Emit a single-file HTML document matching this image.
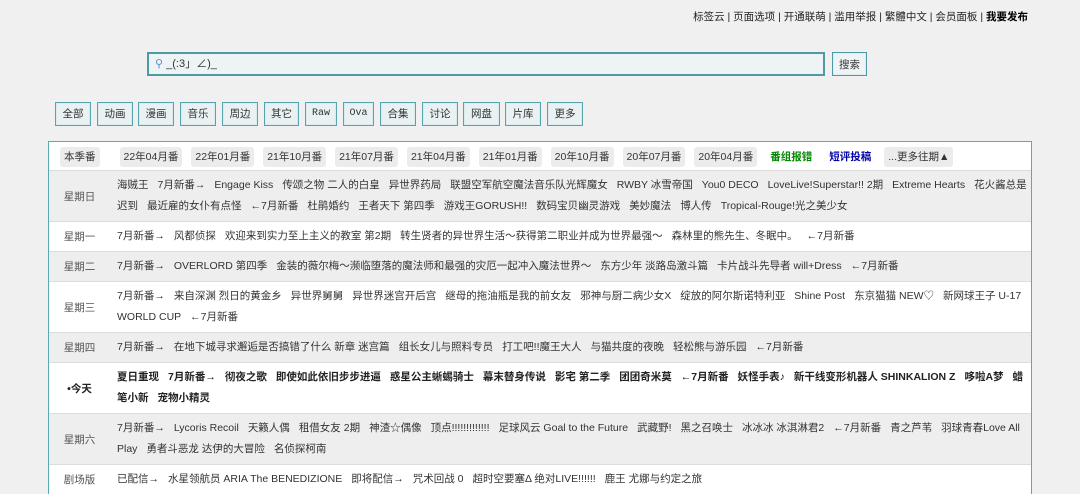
<!DOCTYPE html>
<html><head><meta charset="utf-8"><style>
body{margin:0;background:#f0f0f0;font-family:"Liberation Sans","Noto Sans CJK SC",sans-serif;font-size:10.5px;color:#333;width:1080px;height:492px;overflow:hidden;position:relative}
.top{position:absolute;right:52px;top:9px;font-size:10.5px;color:#222}
.top b{color:#000}
.search{position:absolute;left:147px;top:52px;width:674px;height:20px;border:2px solid #4e9aa3;background:#eef3f5;font-size:11px;line-height:20px}
.search span{margin-left:6px;color:#5a8fd0}
.btn{position:absolute;left:832px;top:52px;width:33px;height:22px;border:1px solid #4e9aa3;background:#eef3f5;text-align:center;line-height:24px;font-size:10.5px;box-shadow:inset 0 0 0 1px #dfeff1}
.cat{position:absolute;top:102px;height:22px;border:1px solid #56a4ad;background:#e9f1f3;text-align:center;line-height:22px;font-size:10.5px;box-shadow:inset 0 0 0 1px #d8ecef}
.tbl{position:absolute;left:48px;top:141px;width:982px;border:1px solid #5aaab2;border-bottom:none;background:#fff}
.hd{height:28px;padding-left:11px;white-space:nowrap}
.hd span{display:inline-block;margin-top:5px;height:20px;line-height:20px;background:#ececec;border-radius:3px;padding:0 4px;margin-right:9px;color:#333}
.hd span:first-child{margin-right:20px}
.row{display:flex;border-top:1px solid #ddd}
.row.g{background:#eeeeee}
.d{width:61px;flex:none;display:flex;align-items:center;justify-content:center;color:#555}
.c{padding:4px 0 4px 7px;line-height:21px;flex:1;white-space:nowrap;overflow:hidden}
.c i{font-style:normal;margin-right:9px}
.b{font-weight:bold;color:#222}
</style></head><body>
<div class="top">标签云 | 页面选项 | 开通联萌 | 滥用举报 | 繁體中文 | 会员面板 | <b>我要发布</b></div>
<div class="search"><span>⚲</span> _(:3」∠)_</div>
<div class="btn">搜索</div>
<div class="cat" style="left:55px;width:34px">全部</div>
<div class="cat" style="left:97px;width:34px">动画</div>
<div class="cat" style="left:138px;width:34px">漫画</div>
<div class="cat" style="left:180px;width:34px">音乐</div>
<div class="cat" style="left:222px;width:34px">周边</div>
<div class="cat" style="left:264px;width:33px">其它</div>
<div class="cat" style="left:305px;width:30px;font-family:'Liberation Mono',monospace;font-size:10px">Raw</div>
<div class="cat" style="left:343px;width:29px;font-family:'Liberation Mono',monospace;font-size:10px">Ova</div>
<div class="cat" style="left:380px;width:34px">合集</div>
<div class="cat" style="left:422px;width:34px">讨论</div>
<div class="cat" style="left:463px;width:35px">网盘</div>
<div class="cat" style="left:505px;width:34px">片库</div>
<div class="cat" style="left:547px;width:34px">更多</div>
<div class="tbl">
<div class="hd"><span>本季番</span><span>22年04月番</span><span>22年01月番</span><span>21年10月番</span><span>21年07月番</span><span>21年04月番</span><span>21年01月番</span><span>20年10月番</span><span>20年07月番</span><span>20年04月番</span><span style="color:#080;font-weight:bold;background:none">番组报错</span><span style="color:#00a;font-weight:bold;background:none">短评投稿</span><span>...更多往期▲</span></div>
<div class="row g"><div class="d">星期日</div><div class="c"><i>海贼王</i><i>7月新番→</i><i>Engage Kiss</i><i>传颂之物 二人的白皇</i><i>异世界药局</i><i>联盟空军航空魔法音乐队光辉魔女</i><i>RWBY 冰雪帝国</i><i>You0 DECO</i><i>LoveLive!Superstar!! 2期</i><i>Extreme Hearts</i><i>花火酱总是</i><br><i>迟到</i><i>最近雇的女仆有点怪</i><i>←7月新番</i><i>杜鹃婚约</i><i>王者天下 第四季</i><i>游戏王GORUSH!!</i><i>数码宝贝幽灵游戏</i><i>美妙魔法</i><i>博人传</i><i>Tropical-Rouge!光之美少女</i></div></div>
<div class="row"><div class="d">星期一</div><div class="c"><i>7月新番→</i><i>风都侦探</i><i>欢迎来到实力至上主义的教室 第2期</i><i>转生贤者的异世界生活～获得第二职业并成为世界最强～</i><i>森林里的熊先生、冬眠中。</i><i>←7月新番</i></div></div>
<div class="row g"><div class="d">星期二</div><div class="c"><i>7月新番→</i><i>OVERLORD 第四季</i><i>金装的薇尔梅～濒临堕落的魔法师和最强的灾厄一起冲入魔法世界～</i><i>东方少年 淡路岛激斗篇</i><i>卡片战斗先导者 will+Dress</i><i>←7月新番</i></div></div>
<div class="row"><div class="d">星期三</div><div class="c"><i>7月新番→</i><i>来自深渊 烈日的黄金乡</i><i>异世界舅舅</i><i>异世界迷宫开后宫</i><i>继母的拖油瓶是我的前女友</i><i>邪神与厨二病少女X</i><i>绽放的阿尔斯诺特利亚</i><i>Shine Post</i><i>东京猫猫 NEW♡</i><i>新网球王子 U-17</i><br><i>WORLD CUP</i><i>←7月新番</i></div></div>
<div class="row g"><div class="d">星期四</div><div class="c"><i>7月新番→</i><i>在地下城寻求邂逅是否搞错了什么 新章 迷宫篇</i><i>组长女儿与照料专员</i><i>打工吧!!魔王大人</i><i>与猫共度的夜晚</i><i>轻松熊与游乐园</i><i>←7月新番</i></div></div>
<div class="row"><div class="d b">•今天</div><div class="c b"><i>夏日重现</i><i>7月新番→</i><i>彻夜之歌</i><i>即使如此依旧步步进逼</i><i>惑星公主蜥蜴骑士</i><i>幕末替身传说</i><i>影宅 第二季</i><i>团团奇米莫</i><i>←7月新番</i><i>妖怪手表♪</i><i>新干线变形机器人 SHINKALION Z</i><i>哆啦A梦</i><i>蜡</i><br><i>笔小新</i><i>宠物小精灵</i></div></div>
<div class="row g"><div class="d">星期六</div><div class="c"><i>7月新番→</i><i>Lycoris Recoil</i><i>天籁人偶</i><i>租借女友 2期</i><i>神渣☆偶像</i><i>顶点!!!!!!!!!!!!!</i><i>足球风云 Goal to the Future</i><i>武藏野!</i><i>黑之召唤士</i><i>冰冰冰 冰淇淋君2</i><i>←7月新番</i><i>青之芦苇</i><i>羽球青春Love All</i><br><i>Play</i><i>勇者斗恶龙 达伊的大冒险</i><i>名侦探柯南</i></div></div>
<div class="row"><div class="d">剧场版</div><div class="c"><i>已配信→</i><i>水星领航员 ARIA The BENEDIZIONE</i><i>即将配信→</i><i>咒术回战 0</i><i>超时空要塞Δ 绝对LIVE!!!!!!</i><i>鹿王 尤娜与约定之旅</i></div></div>
</div>
</body></html>
